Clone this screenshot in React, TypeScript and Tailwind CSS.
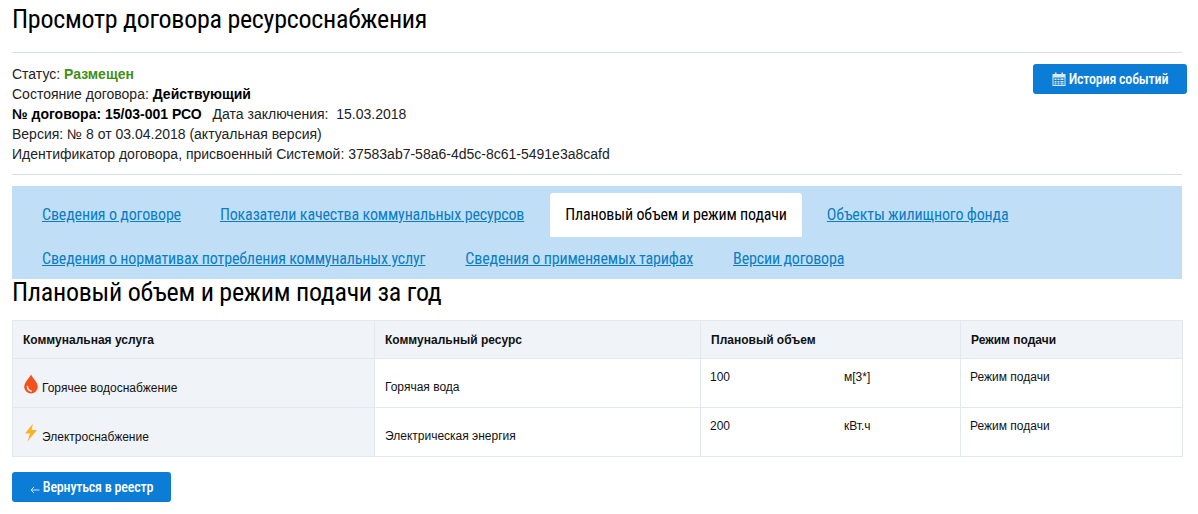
import React from "react";

const narrow = "font-['Roboto_Condensed','Liberation_Sans_Narrow','Liberation_Sans',sans-serif]";

function TabLink({ label, gap = "mr-[10px]" }: { label: string; gap?: string }) {
  return (
    <a href="#" className={`px-[15px] h-[44px] flex items-center ${gap} text-[16px] tracking-[-0.16px] text-[#0b7dc4] underline whitespace-nowrap`}>
      {label}
    </a>
  );
}

function Drop() {
  return (
    <svg width="14" height="20" viewBox="0 0 14 20" className="inline-block shrink-0">
      <path d="M7 0.500C8.500 4 13.800 8 13.800 13a6.800 6.500 0 0 1-13.600 0C0.200 8 5.500 4 7 0.500Z" fill="#f4511e" />
      <path d="M3.500 12.500c0 2.500 1.500 4 3.500 4.500" fill="none" stroke="#fff" strokeWidth="1.400" strokeLinecap="round" />
    </svg>
  );
}

function Bolt() {
  return (
    <svg width="14" height="19" viewBox="0 0 14 19" className="inline-block shrink-0">
      <path d="M9 0.500 1 10.500h5L3.500 18.500 13 7H7.500L9 0.500Z" fill="#fbb124" />
    </svg>
  );
}

function Calendar() {
  return (
    <svg width="14" height="14" viewBox="0 0 13 14" className="shrink-0">
      <path fillRule="evenodd" fill="#dbe9f7" d="M0 2h2.500V0.500h1.500V2h5V0.500h1.500V2H13v12H0V2Zm1 3.500V13h11V5.500H1Z" />
      <path fill="#dbe9f7" d="M2 6.500h2v1.500H2zM5 6.500h2v1.500H5zM8 6.500h3v1.500H8zM2 9h2v1.500H2zM5 9h2v1.500H5zM8 9h3v1.500H8zM2 11.200h2v1.300H2zM5 11.200h2v1.300H5zM8 11.200h3v1.300H8z" />
    </svg>
  );
}

export default function App() {
  return (
    <div className="w-[1198px] h-[514px] bg-white overflow-hidden text-black font-['Liberation_Sans',Arial,sans-serif]">
      <div className="pl-[12px] w-[1182px]">
        <h1 className={`${narrow} text-[26px] tracking-[-0.27px] leading-[30px] pt-[4px] h-[52px] font-normal`}>
          Просмотр договора ресурсоснабжения
        </h1>
        <div className="h-px bg-[#d9dde5]" />
        <div className="relative h-[121px] pt-[11px] text-[14px] leading-[20px] text-[#222]">
          <div>Статус: <b className="text-[#3f8f14]">Размещен</b></div>
          <div>Состояние договора: <b className="text-black">Действующий</b></div>
          <div>
            <b className="text-black">№ договора: 15/03-001 РСО</b>
            <span className="ml-[11px] whitespace-pre">Дата заключения:  15.03.2018</span>
          </div>
          <div>Версия: № 8 от 03.04.2018 (актуальная версия)</div>
          <div>Идентификатор договора, присвоенный Системой: 37583ab7-58a6-4d5c-8c61-5491e3a8cafd</div>
          <button className={`${narrow} absolute left-[1021px] top-[11px] w-[154px] h-[30px] rounded-[3px] bg-[#0b7dd6] text-white text-[14px] font-medium tracking-[-0.2px] flex items-center justify-center gap-[3px]`}>
            <Calendar />
            История событий
          </button>
        </div>
        <div className="h-px bg-[#d9dde5]" />
        <div className={`${narrow} mt-[11px] h-[93px] bg-[#c0dff7] pl-[15px] pt-[7px]`}>
          <div className="flex">
            <TabLink label="Сведения о договоре" gap="mr-[9px]" />
            <TabLink label="Показатели качества коммунальных ресурсов" gap="mr-[11px]" />
            <div className="px-[15px] h-[44px] flex items-center mr-[10px] bg-white rounded-t-[3px] text-[16px] tracking-[-0.16px] whitespace-nowrap">
              Плановый объем и режим подачи
            </div>
            <TabLink label="Объекты жилищного фонда" />
          </div>
          <div className="flex h-[42px]">
            <TabLink label="Сведения о нормативах потребления коммунальных услуг" />
            <TabLink label="Сведения о применяемых тарифах" />
            <TabLink label="Версии договора" />
          </div>
        </div>
        <h2 className={`${narrow} text-[26px] tracking-[-0.27px] leading-[26px] h-[41px] font-normal`}>
          Плановый объем и режим подачи за год
        </h2>
        <table className="w-[1170px] table-fixed border-collapse text-[12px] leading-[16px] text-[#111]">
          <colgroup>
            <col className="w-[362px]" />
            <col className="w-[326px]" />
            <col className="w-[260px]" />
            <col className="w-[222px]" />
          </colgroup>
          <thead>
            <tr className="h-[38px] bg-[#f0f3f7]">
              {["Коммунальная услуга", "Коммунальный ресурс", "Плановый объем", "Режим подачи"].map((h) => (
                <th key={h} className="border border-[#e3e8ee] pl-[10px] text-left font-bold">{h}</th>
              ))}
            </tr>
          </thead>
          <tbody>
            <tr className="h-[49px]">
              <td className="border border-[#e3e8ee] bg-[#f0f3f7] pl-[11px] align-top pt-[15px]">
                <span className="flex items-end gap-[4px]"><Drop /><span className="leading-[14px] translate-y-[1px]">Горячее водоснабжение</span></span>
              </td>
              <td className="border border-[#e3e8ee] pl-[10px] align-top pt-[20px]">Горячая вода</td>
              <td className="border border-[#e3e8ee] pl-[9px] align-top pt-[10px]">
                <div className="flex"><span className="w-[134px]">100</span><span>м[3*]</span></div>
              </td>
              <td className="border border-[#e3e8ee] pl-[9px] align-top pt-[10px]">Режим подачи</td>
            </tr>
            <tr className="h-[49px]">
              <td className="border border-[#e3e8ee] bg-[#f0f3f7] pl-[11px] align-top pt-[15px]">
                <span className="flex items-end gap-[4px]"><Bolt /><span className="leading-[14px] translate-y-[2px]">Электроснабжение</span></span>
              </td>
              <td className="border border-[#e3e8ee] pl-[10px] align-top pt-[20px]">Электрическая энергия</td>
              <td className="border border-[#e3e8ee] pl-[9px] align-top pt-[10px]">
                <div className="flex"><span className="w-[134px]">200</span><span>кВт.ч</span></div>
              </td>
              <td className="border border-[#e3e8ee] pl-[9px] align-top pt-[10px]">Режим подачи</td>
            </tr>
          </tbody>
        </table>
        <button className={`${narrow} mt-[15px] w-[159px] h-[30px] rounded-[3px] bg-[#0b7dd6] text-white text-[14px] font-medium tracking-[-0.2px] flex items-center justify-center gap-[3px]`}>
          <svg width="10" height="10" viewBox="0 0 10 10" className="mt-[5px] shrink-0">
            <path d="M9.500 5H1M4 2 1 5l3 3" fill="none" stroke="#cfe5f8" strokeWidth="1" />
          </svg>
          Вернуться в реестр
        </button>
      </div>
    </div>
  );
}
